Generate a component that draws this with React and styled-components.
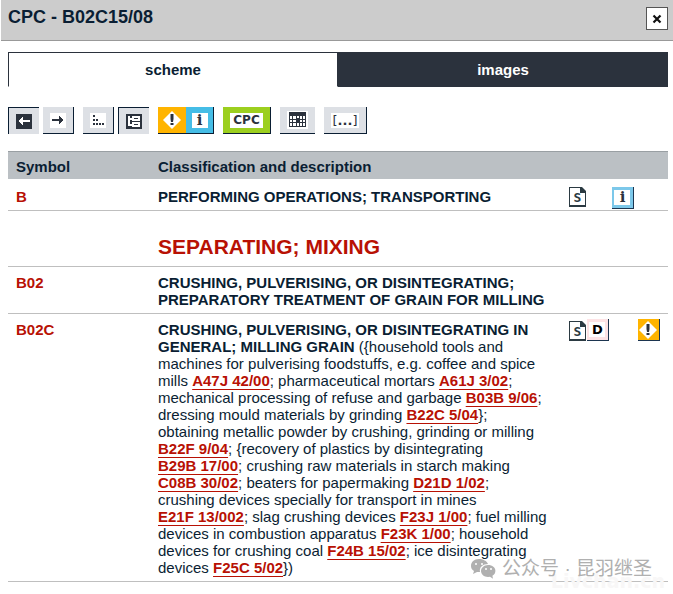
import React from "react";
import styled, { createGlobalStyle } from "styled-components";

const GlobalStyle = createGlobalStyle`
  body {
    margin: 0;
    background: #fff;
    color: #0a1e33;
    font-family: "Liberation Sans", Arial, sans-serif;
    font-size: 15px;
    line-height: 17px;
  }

  * {
    box-sizing: border-box;
  }
`;

const tools = [
  [
    { id: "previous", label: "Previous", icon: "left", pressed: true },
    { id: "next", label: "Next", icon: "right" },
  ],
  [
    { id: "indent", label: "Indented list", icon: "dots" },
    { id: "tree", label: "Tree view", icon: "tree", pressed: true },
  ],
];

function ToolIcon({ name }) {
  return (
    <svg width="16" height="15" viewBox="0 0 16 15" shapeRendering="crispEdges" aria-hidden="true">
      <rect width="16" height="15" fill={name === "left" || name === "tree" ? "#2b323d" : "#fff"} />
      {name === "left" && (
        <path d="M2 7h1v-1h1v-1h1v-1h1v-1h1v3h7v2h-7v3h-1v-1h-1v-1h-1v-1h-1v-1h-1z" fill="#fff" />
      )}
      {name === "right" && (
        <path d="M14 7h-1v-1h-1v-1h-1v-1h-1v-1h-1v3h-7v2h7v3h1v-1h1v-1h1v-1h1v-1h1z" fill="#2b323d" />
      )}
      {name === "dots" && (
        <path d="M3 2h2v2h-2zM3 6h2v2h-2zM6 6h2v2h-2zM3 10h2v2h-2zM6 10h2v2h-2zM9 10h2v2h-2zM12 10h2v2h-2z" fill="#2b323d" />
      )}
      {name === "tree" && (
        <path d="M2 2h2v2h2v-2h8v5h-8v-1h-2v4h2v-2h8v5h-8v-1h-4zM8 4v1h4v-1zM8 10v1h4v-1z" fill="#fff" fillRule="evenodd" />
      )}
    </svg>
  );
}

function WarningIcon() {
  return (
    <svg width="20" height="20" viewBox="0 0 20 20" aria-hidden="true">
      <path d="M10 1l9 9-9 9-9-9z" fill="#fff" />
      <path d="M8.500 4h3v5l-.5 3h-2l-.5-3zM8.500 13h3v2h-3z" fill="#2b323d" />
    </svg>
  );
}

function CalendarIcon() {
  return (
    <svg width="21" height="18" viewBox="0 0 21 18" shapeRendering="crispEdges" aria-hidden="true">
      <rect width="21" height="18" fill="#fff" />
      <rect x="2" y="1" width="17" height="15" fill="#2b323d" />
      <path
        d="M3 5h2v3h-2zM6 5h3v3h-3zM10 5h2v2h-2zM13 5h2v3h-2zM16 5h2v3h-2zM3 9h2v2h-2zM6 9h3v2h-3zM13 9h2v2h-2zM16 9h2v2h-2zM3 12h2v3h-2zM6 12h3v3h-3zM10 12h2v3h-2zM13 12h2v3h-2zM16 12h2v3h-2z"
        fill="#fff"
      />
    </svg>
  );
}

function WechatIcon() {
  return (
    <svg width="26" height="22" viewBox="0 0 26 22" aria-hidden="true">
      <path
        d="M9 1C4 1 1 4 1 8c0 2 1 4 3 5l-1 3 4-2h3c-1-5 3-8 8-8-1-3-5-5-9-5z"
        fill="#b0b0b0"
      />
      <path
        d="M18 7c-4 0-7 3-7 6s3 6 7 6l2-.3 3 2-.6-3c2-1 3-3 3-5 0-3-3-5.700-7.400-5.700z"
        fill="#b0b0b0"
      />
      <circle cx="6" cy="6" r="1" fill="#fff" />
      <circle cx="12" cy="6" r="1" fill="#fff" />
      <circle cx="16" cy="11" r="1" fill="#fff" />
      <circle cx="21" cy="11" r="1" fill="#fff" />
    </svg>
  );
}

function SchemeIcon() {
  return (
    <PageButton type="button" aria-label="Scheme page">
      S
      <PageFold width="6" height="6" viewBox="0 0 6 6" aria-hidden="true">
        <path d="M0 0h6v6h-6z" fill="#2b3a42" />
        <path d="M2 0h4v4z" fill="#fff" />
      </PageFold>
    </PageButton>
  );
}

function Ref({ children }) {
  return <RefLink href="#">{children}</RefLink>;
}

function App() {
  return (
    <>
      <GlobalStyle />
      <Header>
        <Title>CPC - B02C15/08</Title>
        <CloseButton type="button" aria-label="Close">
          <svg width="10" height="10" viewBox="0 0 10 10" aria-hidden="true">
            <path d="M1.500 1.500l7 7M8.500 1.500l-7 7" stroke="#111" strokeWidth="2.200" />
          </svg>
        </CloseButton>
      </Header>

      <Content>
        <Tabs>
          <Tab type="button" $active>scheme</Tab>
          <Tab type="button">images</Tab>
        </Tabs>

        <Toolbar>
          {tools.map((group) => (
            <ToolGroup key={group[0].id}>
              {group.map((tool) => (
                <ToolButton key={tool.id} type="button" aria-label={tool.label} $pressed={tool.pressed}>
                  <ToolIcon name={tool.icon} />
                </ToolButton>
              ))}
            </ToolGroup>
          ))}
          <ToolGroup $joined>
            <ToolButton type="button" aria-label="Warnings" $color="#ffb400" $width={28} $flat>
              <WarningIcon />
            </ToolButton>
            <ToolButton type="button" aria-label="Notes" $color="#45bde6" $width={28}>
              <Letter $serif $size={15}>i</Letter>
            </ToolButton>
          </ToolGroup>
          <ToolButton type="button" $color="#9ccf1f" $width={48}>
            <Letter $width={33} $size={12}>CPC</Letter>
          </ToolButton>
          <ToolButton type="button" aria-label="Dates" $width={35} $flat>
            <CalendarIcon />
          </ToolButton>
          <ToolButton type="button" $width={43}>
            <Letter $width={28} $size={13} $light>[<b>...</b>]</Letter>
          </ToolButton>
        </Toolbar>

        <Table>
          <colgroup>
            <col width="150" />
            <col />
            <col width="43" />
            <col width="26" />
            <col width="30" />
          </colgroup>
          <thead>
            <tr>
              <HeadCell>Symbol</HeadCell>
              <HeadCell colSpan="4" $flush>Classification and description</HeadCell>
            </tr>
          </thead>
          <tbody>
            <tr>
              <SymbolCell $top={9}>B</SymbolCell>
              <TextCell $top={9}><b>PERFORMING OPERATIONS; TRANSPORTING</b></TextCell>
              <IconCell $top={8}><Icons><SchemeIcon /></Icons></IconCell>
              <IconCell $top={8}>
                <NoteButton type="button" aria-label="Notes" $color="#7cc8ea">
                  <Letter $serif $size={15}>i</Letter>
                </NoteButton>
              </IconCell>
              <IconCell />
            </tr>
            <tr>
              <SymbolCell />
              <TextCell colSpan="4"><SectionTitle>SEPARATING; MIXING</SectionTitle></TextCell>
            </tr>
            <tr>
              <SymbolCell>B02</SymbolCell>
              <TextCell>
                <b>CRUSHING, PULVERISING, OR DISINTEGRATING; PREPARATORY TREATMENT OF GRAIN FOR MILLING</b>
              </TextCell>
              <IconCell />
              <IconCell />
              <IconCell />
            </tr>
            <tr>
              <SymbolCell>B02C</SymbolCell>
              <TextCell>
                <b>CRUSHING, PULVERISING, OR DISINTEGRATING IN GENERAL; MILLING GRAIN</b>{" "}
                ({"{"}household tools and machines for pulverising foodstuffs, e.g. coffee and spice
                mills <Ref>A47J 42/00</Ref>; pharmaceutical mortars <Ref>A61J 3/02</Ref>; mechanical
                processing of refuse and garbage <Ref>B03B 9/06</Ref>; dressing mould materials by
                grinding <Ref>B22C 5/04</Ref>{"}"}; obtaining metallic powder by crushing, grinding or
                milling <Ref>B22F 9/04</Ref>; {"{"}recovery of plastics by disintegrating{" "}
                <Ref>B29B 17/00</Ref>; crushing raw materials in starch making <Ref>C08B 30/02</Ref>;
                beaters for papermaking <Ref>D21D 1/02</Ref>; crushing devices specially for transport
                in mines <Ref>E21F 13/002</Ref>; slag crushing devices <Ref>F23J 1/00</Ref>; fuel
                milling devices in combustion apparatus <Ref>F23K 1/00</Ref>; household devices for
                crushing coal <Ref>F24B 15/02</Ref>; ice disintegrating devices{" "}
                <Ref>F25C 5/02</Ref>{"}"})
              </TextCell>
              <IconCell>
                <Icons>
                  <SchemeIcon />
                  <NoteButton type="button" aria-label="Definition" $color="#fde3e5">
                    <Letter $color="#000" $size={13}>D</Letter>
                  </NoteButton>
                </Icons>
              </IconCell>
              <IconCell />
              <IconCell>
                <NoteButton type="button" aria-label="Warning" $color="#ffb400">
                  <WarningIcon />
                </NoteButton>
              </IconCell>
            </tr>
          </tbody>
        </Table>
        <SiteMark>Livchan.cn</SiteMark>
        <Watermark>
          <WechatIcon />
          公众号 · 昆羽继圣
        </Watermark>
      </Content>
    </>
  );
}

const Header = styled.header`
  display: flex;
  justify-content: space-between;
  align-items: flex-start;
  height: 41px;
  margin-left: 1px;
  padding: 7px 5px 0 7px;
  background: #ccc;
  border-bottom: 1px solid #999;
`;

const Title = styled.h1`
  margin: 0;
  font-size: 18px;
  line-height: 20px;
`;

const CloseButton = styled.button`
  display: flex;
  align-items: center;
  justify-content: center;
  width: 22px;
  height: 23px;
  padding: 0;
  background: #fff;
  border: 1px solid #555;
`;

const Content = styled.main`
  position: relative;
  padding: 11px 5px 12px 8px;
`;

const Tabs = styled.nav`
  display: grid;
  grid-template-columns: 1fr 1fr;
`;

const Tab = styled.button`
  height: 35px;
  padding: 0;
  border: 1px solid #2b323d;
  border-bottom-color: ${(props) => (props.$active ? "#fff" : "#2b323d")};
  background: ${(props) => (props.$active ? "#fff" : "#2b323d")};
  color: ${(props) => (props.$active ? "#0a1e33" : "#fff")};
  font: bold 15px "Liberation Sans", Arial, sans-serif;
`;

const Toolbar = styled.div`
  display: flex;
  gap: 9px;
  margin: 20px 0 17px;
`;

const ToolGroup = styled.div`
  display: flex;
  gap: ${(props) => (props.$joined ? 0 : 4)}px;
`;

const ToolButton = styled.button`
  display: flex;
  align-items: center;
  justify-content: center;
  width: ${(props) => props.$width || 31}px;
  height: 27px;
  padding: 0;
  background: ${(props) => props.$color || "#dde0e5"};
  border: 0 solid #0a1e33;
  border-width: ${(props) => (props.$pressed ? "1px 0 0 1px" : props.$flat ? "0 0 1px" : "0 1px 1px 0")};
`;

const Letter = styled.span`
  width: ${(props) => props.$width || 16}px;
  height: 15px;
  background: #fff;
  color: ${(props) => props.$color || "#2b323d"};
  font-family: ${(props) => (props.$serif ? '"DejaVu Serif", serif' : '"DejaVu Sans", sans-serif')};
  font-size: ${(props) => props.$size}px;
  font-weight: ${(props) => (props.$light ? "normal" : "bold")};
  line-height: 15px;
  text-align: center;
`;

const Table = styled.table`
  width: 100%;
  table-layout: fixed;
  border-collapse: separate;
  border-spacing: 0;
`;

const HeadCell = styled.th`
  height: 28px;
  padding: 6px 0 4px ${(props) => (props.$flush ? 0 : 8)}px;
  background: #bbc0c4;
  border-top: 1px solid #999fa3;
  text-align: left;
`;

const Cell = styled.td`
  padding: ${(props) => props.$top || 7}px 0 5px;
  border-bottom: 1px solid #bfbfbf;
  vertical-align: top;
`;

const SymbolCell = styled(Cell)`
  padding-left: 8px;
  color: #b81104;
  font-weight: bold;
`;

const TextCell = styled(Cell)`
  padding-right: 20px;
`;

const IconCell = styled(Cell)`
  padding: ${(props) => props.$top || 5}px 0 0;
`;

const SectionTitle = styled.h2`
  margin: 17px 0 2px;
  color: #b81104;
  font-size: 21px;
  line-height: 24px;
`;

const RefLink = styled.a`
  color: #b81104;
  font-weight: bold;
  text-decoration: underline 1px;
  text-decoration-skip-ink: none;
  text-underline-offset: 3px;
  white-space: nowrap;
`;

const Icons = styled.div`
  display: flex;
  align-items: flex-end;
  gap: 1px;
`;

const PageButton = styled.button`
  position: relative;
  width: 17px;
  height: 20px;
  padding: 2px 0 0;
  background: #fff;
  border: 1px solid #2b3a42;
  border-bottom-width: 2px;
  color: #2b3a42;
  font: bold 13px "DejaVu Sans Mono", monospace;
  line-height: 15px;
  text-align: center;
`;

const PageFold = styled.svg`
  position: absolute;
  top: -1px;
  right: -1px;
`;

const NoteButton = styled.button`
  display: flex;
  align-items: center;
  justify-content: center;
  width: 22px;
  height: 22px;
  padding: 0;
  background: ${(props) => props.$color};
  border: 0 solid #1c3550;
  border-width: 0 1px 1px 0;
`;

const SiteMark = styled.div`
  position: absolute;
  right: 8px;
  bottom: 2px;
  color: #f8f7f7;
  font: bold 19px "DejaVu Sans", sans-serif;
`;

const Watermark = styled.div`
  position: absolute;
  right: 21px;
  bottom: 14px;
  display: flex;
  align-items: center;
  gap: 6px;
  color: #b0b0b0;
  font: 19px "Liberation Sans", "Noto Sans CJK SC", sans-serif;
  line-height: 22px;
`;

export default App;
